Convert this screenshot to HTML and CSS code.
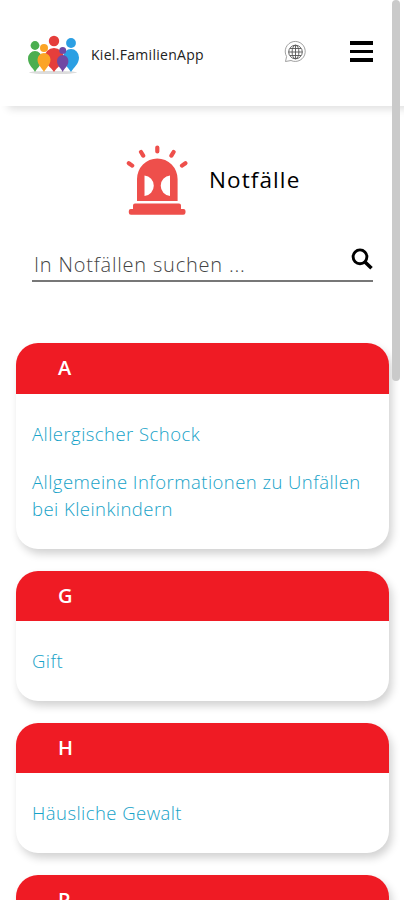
FILE: index.html
```html
<!DOCTYPE html>
<html lang="de">

<head>
    <title>Kiel.FamilienApp</title>
    <meta charset="utf-8">
    <meta name="viewport" content="width=device-width, initial-scale=1.0">
    <link rel="stylesheet" href="styles.css">
</head>

<body>
    <header>
        <a class="logo" href="#">
            <svg width="54" height="42" viewBox="0 0 54 42">
                <ellipse cx="27" cy="37.5" rx="24" ry="1.6" fill="#dcdcdc" />
                <g fill="#4bae50">
                    <circle cx="9" cy="10.5" r="4.4" />
                    <path d="M9 37C7 33 2 30 2 23.500a7 7.500 0 0 1 14 0C16 30 11 33 9 37z" />
                </g>
                <g fill="#2b9fe3">
                    <circle cx="45" cy="8" r="4.900" />
                    <path d="M45 37C42 32 37 29 37 22.500a8 8.500 0 0 1 16 0C53 29 48 32 45 37z" />
                </g>
                <g fill="#e53e3b">
                    <circle cx="28" cy="6" r="5.200" />
                    <path d="M28 37C25 32 18.500 29 18.500 22.500a9.500 9.500 0 0 1 19 0C37.500 29 31 32 28 37z" />
                </g>
                <g fill="#fba426">
                    <circle cx="18" cy="13" r="4" />
                    <path d="M18 37C16 33 11.500 30 11.500 24.500a6.500 6.500 0 0 1 13 0C24.500 30 20 33 18 37z" />
                </g>
                <g fill="#7049a3">
                    <circle cx="36.700" cy="15.500" r="3.500" />
                    <path d="M36.700 37C35 33 31 31 31 26a5.700 5.900 0 0 1 11.400 0C42.400 31 38.500 33 36.700 37z" />
                </g>
            </svg>
            <span>Kiel.FamilienApp</span>
        </a>
        <button class="sprache" aria-label="Sprache">
            <svg width="24" height="24" viewBox="0 0 24 24" fill="none" stroke="#555">
                <path stroke="#888" stroke-width=".8" d="M2.500 21.500L3.600 16.500A10 10 0 1 1 8 20.500z" />
                <g stroke-width=".9">
                    <circle cx="12.500" cy="12" r="6.800" />
                    <ellipse cx="12.500" cy="12" rx="3.400" ry="6.800" />
                    <path d="M12.500 5.200v13.600M5.700 12h13.600M7 8.500h11M7 15.500h11" />
                </g>
            </svg>
        </button>
        <button class="menu" aria-label="Menü">
            <span></span>
            <span></span>
            <span></span>
        </button>
    </header>

    <main>
        <div class="titel">
            <svg width="62" height="72" viewBox="0 0 62 72" fill="#ee4f4b">
                <path d="M11 57V35a20.300 20.500 0 0 1 40.600 0V57zM18.500 31.500V52a10.300 10.300 0 0 0 0-20.500zM44 31.500a10.300 10.300 0 0 0 0 20.500z" fill-rule="evenodd" />
                <path d="M9 59.500h44a2 2 0 0 1 2 2V65h2.500a2 2 0 0 1 2 2v1.500a2.200 2.200 0 0 1-2.200 2.200H5a2.200 2.200 0 0 1-2.200-2.200V67a2 2 0 0 1 2-2H7v-3.500a2 2 0 0 1 2-2z" />
                <path d="M31.300 3.500v4M15 8l2.200 3.600M47.600 8l-2.200 3.600M2.800 19.200l3.400 2.400M59.400 19.200L56 21.600" fill="none" stroke="#ee4f4b" stroke-width="4.200" stroke-linecap="round" />
            </svg>
            <h1>Notfälle</h1>
        </div>

        <form class="suche">
            <input type="text" placeholder="In Notfällen suchen ...">
            <svg width="22" height="22" viewBox="0 0 22 22" fill="none" stroke="#000">
                <circle cx="9" cy="8.800" r="6.900" stroke-width="2.900" />
                <path d="M14 14l6.500 6.300" stroke-width="3.600" />
            </svg>
        </form>

        <section id="liste">
            <article>
                <h2>A</h2>
                <ul>
                    <li><a href="#">Allergischer Schock</a></li>
                    <li><a href="#">Allgemeine Informationen zu Unfällen bei Kleinkindern</a></li>
                </ul>
            </article>
            <article>
                <h2>G</h2>
                <ul>
                    <li><a href="#">Gift</a></li>
                </ul>
            </article>
            <article>
                <h2>H</h2>
                <ul>
                    <li><a href="#">Häusliche Gewalt</a></li>
                </ul>
            </article>
            <article>
                <h2>P</h2>
            </article>
        </section>
    </main>

    <div class="scrollbar"></div>
</body>

</html>
```
FILE: styles.css
```css
* {
    box-sizing: border-box;
}

body {
    margin: 0;
    height: 900px;
    overflow: hidden;
    position: relative;
    background: #fff;
    color: #000;
    font-family: "Open Sans", "Noto Sans", sans-serif;
}

button {
    border: none;
    background: none;
    padding: 0;
}

header {
    display: flex;
    align-items: center;
    height: 106px;
    padding: 0 31px 0 26px;
    box-shadow: 8px 3px 8px rgba(0, 0, 0, 0.13);
}

.logo {
    display: flex;
    align-items: center;
    gap: 11px;
    margin-top: 5px;
    color: #222;
    font-size: 14px;
    letter-spacing: 0.3px;
    text-decoration: none;
}

.logo span {
    margin-top: -3px;
}

.sprache {
    height: 24px;
    margin-left: auto;
    margin-top: -3px;
}

.menu {
    display: flex;
    flex-direction: column;
    gap: 5px;
    margin-left: 43px;
    margin-top: -3px;
}

.menu span {
    width: 23px;
    height: 3.5px;
    background: #000;
}

.titel {
    display: flex;
    align-items: center;
    gap: 21px;
    height: 72px;
    margin-top: 38px;
    padding-left: 126px;
}

h1 {
    margin: -2px 0 0;
    font-size: 22.5px;
    font-weight: 400;
    letter-spacing: 1.1px;
}

.suche {
    display: flex;
    justify-content: space-between;
    height: 36px;
    margin: 30px 31px 0 32px;
    border-bottom: 2px solid #777;
}

.suche input {
    width: 280px;
    padding: 2px 2px 0;
    border: none;
    outline: none;
    background: none;
    font: 300 20px "Open Sans", "Noto Sans", sans-serif;
    letter-spacing: 0.8px;
}

.suche input::placeholder {
    color: #444;
}

.suche svg {
    margin-top: 2px;
}

#liste {
    display: flex;
    flex-direction: column;
    gap: 21.7px;
    margin: 61.4px 15px 0 16px;
}

article {
    border-radius: 22px;
    overflow: hidden;
    background: #fff;
    box-shadow: 3px 5px 9px rgba(0, 0, 0, 0.18);
}

h2 {
    height: 50.5px;
    margin: 0;
    padding-left: 42px;
    background: #ef1b24;
    color: #fff;
    font-size: 20px;
    font-weight: 600;
    line-height: 50px;
}

ul {
    display: flex;
    flex-direction: column;
    gap: 21px;
    margin: 0;
    padding: 26px 16px 27px;
    list-style: none;
}

li {
    font-size: 18.5px;
    font-weight: 300;
    line-height: 27px;
    letter-spacing: 0.45px;
}

li a {
    color: #16a2c8;
    text-decoration: none;
}

/* ligger over siden */
.scrollbar {
    position: absolute;
    top: 0;
    right: 4px;
    width: 8px;
    height: 381px;
    border-radius: 4px;
    background: #cacaca;
}
```
